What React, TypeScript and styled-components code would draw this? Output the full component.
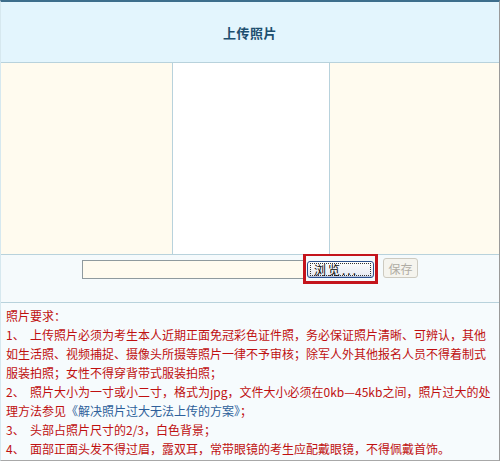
import React from 'react';
import styled, { createGlobalStyle } from 'styled-components';

const GlobalStyle = createGlobalStyle`
  body {
    margin: 0;
    background: #ffffff;
    font-family: "Noto Sans CJK SC", "Liberation Sans", sans-serif;
    font-size: 12px;
  }
`;

const Panel = styled.div`
  width: 500px;
  box-sizing: border-box;
  border-top: 2px solid #3d6e8c;
  border-left: 1px solid #d6e8ef;
  border-right: 1px solid #9a9a9a;
  border-bottom: 1px solid #a8a8a8;
`;

const Header = styled.div`
  height: 60px;
  display: flex;
  align-items: center;
  justify-content: center;
  background: #e3f5fd;
  border-bottom: 1px solid #b8d2dc;
`;

const Title = styled.h3`
  margin: 0;
  font-size: 13px;
  font-weight: bold;
  color: #1d4f6f;
  letter-spacing: 0.5px;
`;

const PhotoRow = styled.div`
  display: grid;
  grid-template-columns: 171px 158px 1fr;
  height: 191px;
  border-bottom: 1px solid #b8d2dc;
`;

const Side = styled.div`
  background: #fffbef;
`;

const PhotoBox = styled.div`
  background: #ffffff;
  border-left: 1px solid #b8d2dc;
  border-right: 1px solid #b8d2dc;
`;

const UploadRow = styled.div`
  height: 48px;
  box-sizing: border-box;
  display: flex;
  justify-content: center;
  align-items: flex-start;
  background: #f5fafc;
  border-bottom: 1px solid #b8d2dc;
`;

const FileInput = styled.div`
  width: 220px;
  height: 17px;
  margin-top: 5px;
  background: #fffbef;
  border: 1px solid #8f9a9e;
  border-right: none;
`;

const Highlight = styled.div`
  display: flex;
  padding: 5px 1px 3px 1px;
  border: 3px solid #c4141c;
  border-top-width: 2px;
  margin-top: -1px;
`;

const BrowseButton = styled.button`
  width: 67px;
  height: 17px;
  box-sizing: border-box;
  padding: 1px 2px;
  font-family: inherit;
  font-size: 12px;
  color: #000;
  border: 1px solid #2b4f8c;
  border-radius: 3px;
  background: linear-gradient(#ffffff, #e4e8f2);
  box-shadow: inset 0 -1px 0 #b9c6e3;
  display: flex;
  overflow: visible;
`;

const FocusRing = styled.span`
  flex: 1;
  display: flex;
  align-items: center;
  padding-left: 3px;
  border: 1px dotted #333;
  line-height: 12px;
  letter-spacing: 2px;
`;

const SaveButton = styled.button`
  margin: 3px 0 0 5px;
  width: 35px;
  height: 20px;
  padding: 0;
  font-family: inherit;
  font-size: 12px;
  color: #b0aca4;
  background: #f5f4ee;
  border: 1px solid #cdcac0;
  border-radius: 3px;
`;

const Notes = styled.div`
  background: #f6fbfd;
  padding: 3px 5px 2px 5px;
  height: 157px;
  box-sizing: border-box;
  color: #bf1010;
  font-size: 12px;
  line-height: 19px;
  white-space: nowrap;
`;

const Line = styled.div``;

const Num = styled.span`
  display: inline-block;
  width: 24px;
`;

const Link = styled.a`
  color: #2d5f9a;
  text-decoration: none;
`;

const Item = ({ n, children }: { n: number; children: React.ReactNode }) => (
  <Line>
    <Num>{n}、</Num>
    {children}
  </Line>
);

export default function App() {
  return (
    <>
      <GlobalStyle />
      <Panel>
        <Header>
          <Title>上传照片</Title>
        </Header>
        <PhotoRow>
          <Side />
          <PhotoBox />
          <Side />
        </PhotoRow>
        <UploadRow>
          <FileInput />
          <Highlight>
            <BrowseButton>
              <FocusRing>浏览...</FocusRing>
            </BrowseButton>
          </Highlight>
          <SaveButton disabled>保存</SaveButton>
        </UploadRow>
        <Notes>
          <Line>照片要求：</Line>
          <Item n={1}>
            上传照片必须为考生本人近期正面免冠彩色证件照，务必保证照片清晰、可辨认，其他
            <br />
            如生活照、视频捕捉、摄像头所摄等照片一律不予审核；除军人外其他报名人员不得着制式
            <br />
            服装拍照；女性不得穿背带式服装拍照；
          </Item>
          <Item n={2}>
            照片大小为一寸或小二寸，格式为jpg，文件大小必须在0kb—45kb之间，照片过大的处
            <br />
            理方法参见<Link href="#">《解决照片过大无法上传的方案》</Link>；
          </Item>
          <Item n={3}>头部占照片尺寸的2/3，白色背景；</Item>
          <Item n={4}>面部正面头发不得过眉，露双耳，常带眼镜的考生应配戴眼镜，不得佩戴首饰。</Item>
        </Notes>
      </Panel>
    </>
  );
}
